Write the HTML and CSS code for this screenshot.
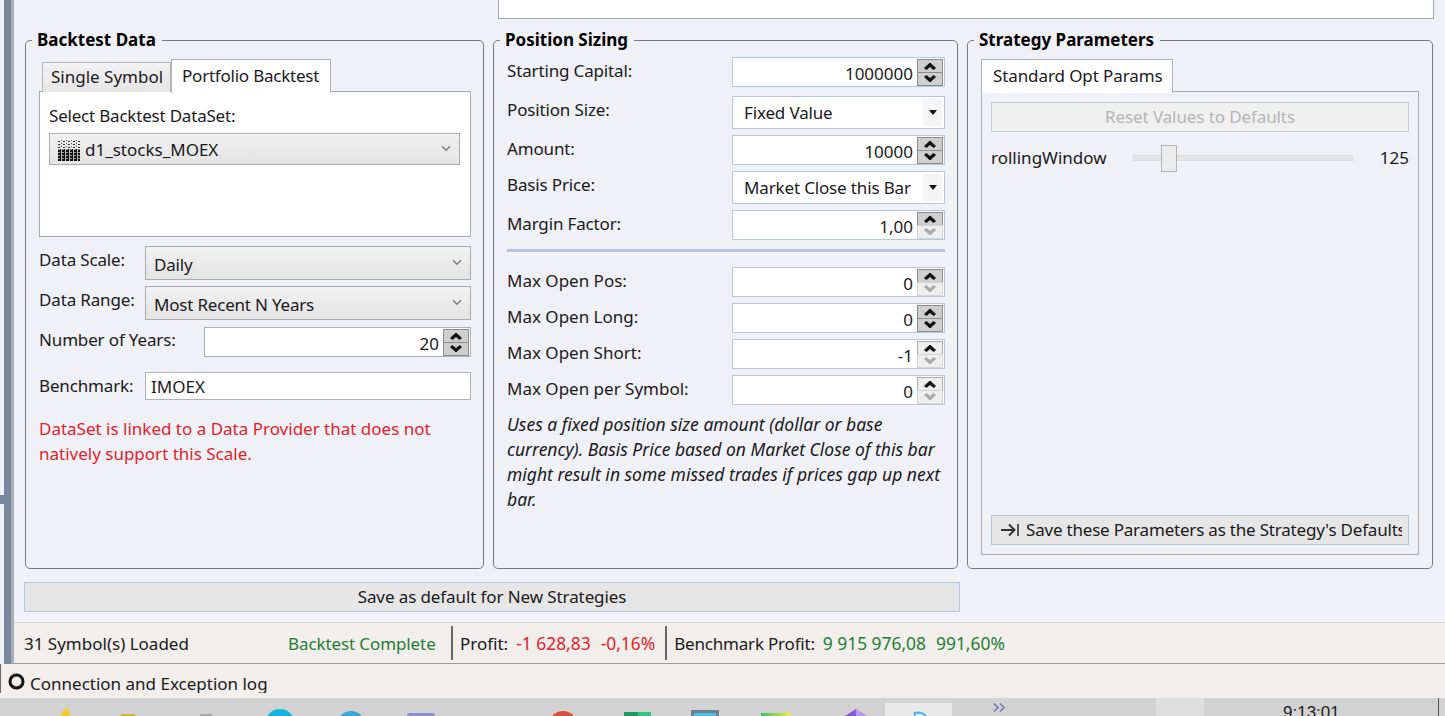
FILE: index.html
```html
<!DOCTYPE html>
<html lang="en">
<head>
<meta charset="utf-8">
<title>Backtest Settings</title>
<link rel="stylesheet" href="styles.css">
</head>
<body>
<svg class="defs" width="0" height="0">
  <defs>
    <symbol id="chev" viewBox="0 0 10 7"><path d="M1 1.2 5 5.2l4-4" fill="none" stroke="#808080" stroke-width="1.6"/></symbol>
    <symbol id="up" viewBox="0 0 12 8"><path d="M6 1 11.5 6 9.5 7.5 6 4.5 2.5 7.5 .5 6Z"/></symbol>
    <symbol id="down" viewBox="0 0 12 8"><path d="M6 7 11.5 2 9.5 .5 6 3.5 2.5 .5 .5 2Z"/></symbol>
    <pattern id="dots" width="5" height="3" patternUnits="userSpaceOnUse"><rect width="2" height="1" fill="#333"/><rect x="3" y="2" width="1" height="1" fill="#555"/></pattern>
    <pattern id="grid" width="4" height="3" patternUnits="userSpaceOnUse"><rect width="4" height="3" fill="#111"/><rect x="3" width="1" height="3" fill="#bbb"/><rect y="2" width="2" height="1" fill="#999"/></pattern>
    <linearGradient id="rb"><stop offset="0" stop-color="#2fc46a"/><stop offset="1" stop-color="#f6f03c"/></linearGradient>
  </defs>
</svg>
<div class="app">
  <div class="main">
    <div class="strip"><div class="strip-mark"></div></div>
    <div class="content">
      <div class="topbox"></div>
      <div class="groups">
        <fieldset class="group">
          <legend>Backtest Data</legend>
          <div class="tabs tabs-data">
            <div class="tab">Single Symbol</div>
            <div class="tab tab-active tab-port">Portfolio Backtest</div>
          </div>
          <div class="tabpanel panel-data">
            <div class="panel-label">Select Backtest DataSet:</div>
            <div class="combo combo-set">
              <svg class="ds-icon" width="22" height="23" viewBox="0 0 22 23"><rect y="1" width="22" height="10" fill="url(#dots)"/><rect y="11" width="22" height="12" fill="url(#grid)"/></svg>
              <span class="combo-text">d1_stocks_MOEX</span>
              <svg class="chev" width="10" height="7"><use href="#chev"/></svg>
            </div>
          </div>
          <div class="row row-a">
            <span class="lab lab-up">Data Scale:</span>
            <div class="combo combo-tall"><span class="combo-text">Daily</span><svg class="chev" width="10" height="7"><use href="#chev"/></svg></div>
          </div>
          <div class="row row-b">
            <span class="lab lab-up">Data Range:</span>
            <div class="combo combo-tall"><span class="combo-text">Most Recent N Years</span><svg class="chev" width="10" height="7"><use href="#chev"/></svg></div>
          </div>
          <div class="row row-c">
            <span class="lab">Number of Years:</span>
            <div class="spin spin-gray"><span class="val">20</span><div class="spinbtns"><span class="sb"><svg width="12" height="8"><use href="#up"/></svg></span><span class="sb"><svg width="12" height="8"><use href="#down"/></svg></span></div></div>
          </div>
          <div class="row row-d">
            <span class="lab lab-flat">Benchmark:</span>
            <div class="textbox">IMOEX</div>
          </div>
          <p class="warn">DataSet is linked to a Data Provider that does not natively support this Scale.</p>
        </fieldset>

        <fieldset class="group">
          <legend>Position Sizing</legend>
          <div class="frow frow-first">
            <span class="lab">Starting Capital:</span>
            <div class="spin"><span class="val">1000000</span><div class="spinbtns"><span class="sb"><svg width="12" height="8"><use href="#up"/></svg></span><span class="sb"><svg width="12" height="8"><use href="#down"/></svg></span></div></div>
          </div>
          <div class="frow frow-pos">
            <span class="lab lab-drop">Position Size:</span>
            <div class="drop"><span class="drop-text">Fixed Value</span><span class="drop-btn"><i class="tri"></i></span></div>
          </div>
          <div class="frow">
            <span class="lab">Amount:</span>
            <div class="spin"><span class="val">10000</span><div class="spinbtns"><span class="sb"><svg width="12" height="8"><use href="#up"/></svg></span><span class="sb"><svg width="12" height="8"><use href="#down"/></svg></span></div></div>
          </div>
          <div class="frow">
            <span class="lab lab-drop">Basis Price:</span>
            <div class="drop"><span class="drop-text">Market Close this Bar</span><span class="drop-btn"><i class="tri"></i></span></div>
          </div>
          <div class="frow">
            <span class="lab">Margin Factor:</span>
            <div class="spin"><span class="val">1,00</span><div class="spinbtns"><span class="sb"><svg width="12" height="8"><use href="#up"/></svg></span><span class="sb sb-off"><svg width="12" height="8"><use href="#down"/></svg></span></div></div>
          </div>
          <div class="sep"></div>
          <div class="frow frow-max">
            <span class="lab">Max Open Pos:</span>
            <div class="spin"><span class="val">0</span><div class="spinbtns"><span class="sb"><svg width="12" height="8"><use href="#up"/></svg></span><span class="sb sb-off"><svg width="12" height="8"><use href="#down"/></svg></span></div></div>
          </div>
          <div class="frow frow-max">
            <span class="lab">Max Open Long:</span>
            <div class="spin"><span class="val">0</span><div class="spinbtns"><span class="sb"><svg width="12" height="8"><use href="#up"/></svg></span><span class="sb"><svg width="12" height="8"><use href="#down"/></svg></span></div></div>
          </div>
          <div class="frow frow-max">
            <span class="lab">Max Open Short:</span>
            <div class="spin"><span class="val">-1</span><div class="spinbtns"><span class="sb sb-light"><svg width="12" height="8"><use href="#up"/></svg></span><span class="sb sb-off"><svg width="12" height="8"><use href="#down"/></svg></span></div></div>
          </div>
          <div class="frow frow-max">
            <span class="lab">Max Open per Symbol:</span>
            <div class="spin"><span class="val">0</span><div class="spinbtns"><span class="sb sb-light"><svg width="12" height="8"><use href="#up"/></svg></span><span class="sb sb-off"><svg width="12" height="8"><use href="#down"/></svg></span></div></div>
          </div>
          <p class="note">Uses a fixed position size amount (dollar or base currency). Basis Price based on Market Close of this bar might result in some missed trades if prices gap up next bar.</p>
        </fieldset>

        <fieldset class="group">
          <legend>Strategy Parameters</legend>
          <div class="tabs">
            <div class="tab tab-active tab-params">Standard Opt Params</div>
          </div>
          <div class="tabpanel panel-params">
            <div class="btn btn-off">Reset Values to Defaults</div>
            <div class="slider-row">
              <span class="slider-name">rollingWindow</span>
              <div class="track"><div class="thumb"></div></div>
              <span class="slider-val">125</span>
            </div>
            <div class="btn btn-save">
              <svg width="20" height="16" viewBox="0 0 20 16"><path d="M1 8h13M9 2.5 14.5 8 9 13.5" fill="none" stroke="#333" stroke-width="2"/><path d="M18 2v12" stroke="#333" stroke-width="1.6"/></svg>
              <span class="save-text">Save these Parameters as the Strategy's Defaults</span>
            </div>
          </div>
        </fieldset>
      </div>
      <div class="btn btn-wide">Save as default for New Strategies</div>
      <div class="status">
        <span class="st-loaded">31 Symbol(s) Loaded</span>
        <span class="st-done good">Backtest Complete</span>
        <span class="st-div"></span>
        <span class="st-item">Profit:</span>
        <span class="st-num bad">-1 628,83</span>
        <span class="st-num bad">-0,16%</span>
        <span class="st-div"></span>
        <span class="st-item st-bench">Benchmark Profit:</span>
        <span class="st-num good">9 915 976,08</span>
        <span class="st-num good">991,60%</span>
      </div>
    </div>
  </div>
  <div class="logbar">
    <div class="log-inner">
      <svg width="18" height="18" viewBox="0 0 18 18"><circle cx="8.5" cy="8.5" r="6.5" fill="none" stroke="#111" stroke-width="3"/></svg>
      <span>Connection and Exception log</span>
    </div>
  </div>
  <div class="taskbar">
    <svg class="tb-icons" width="885" height="18" viewBox="0 0 885 18">
      <path d="M65 11l3-1 2 8H60z" fill="#f6c927"/>
      <rect x="121" y="16" width="14" height="4" fill="#e8a93b"/>
      <rect x="200" y="16" width="12" height="3" fill="#a8a8a8"/>
      <circle cx="280" cy="26" r="15" fill="#12b5de"/>
      <circle cx="351" cy="27" r="14" fill="#3ea5e0"/>
      <rect x="407" y="15" width="28" height="12" rx="3" fill="#8d8fd0"/>
      <circle cx="563" cy="27" r="14" fill="#dc4f3e"/>
      <rect x="624" y="14" width="14" height="8" fill="#1f9a60"/>
      <rect x="638" y="14" width="13" height="8" fill="#33c481"/>
      <rect x="691" y="12" width="28" height="8" fill="#6f7f8c"/>
      <rect x="694" y="15" width="22" height="5" fill="#45c2ee"/>
      <rect x="761" y="15" width="30" height="5" fill="url(#rb)"/>
      <path d="M856 11l11 7h-22z" fill="#8a5ad8"/>
      <path d="M856 11l11 7h-11z" fill="#bb99ec"/>
    </svg>
    <div class="tb-active"><svg width="20" height="13" viewBox="0 0 20 13"><path d="M5 3c5-1 9 0 12 3M9 13l-4-10" fill="none" stroke="#4bb4ea" stroke-width="2"/></svg></div>
    <svg class="tb-more" width="12" height="9" viewBox="0 0 12 9"><path d="M1 .5 5 4.500 1 8.500M7 .5 11 4.500 7 8.500" fill="none" stroke="#7175b8" stroke-width="1.500"/></svg>
    <div class="tb-light"></div>
    <span class="tb-clock">9:13:01</span>
    <span class="tb-edge"></span>
  </div>
</div>
</body>
</html>
```
FILE: styles.css
```css
* { box-sizing: border-box; }
html, body { margin: 0; padding: 0; height: 100%; }
body {
  background: #f0f0f7;
  color: #1a1a1a;
  font-family: "Noto Sans", "Open Sans", sans-serif;
  font-size: 17px;
  overflow: hidden;
}
.defs { display: block; height: 0; }
.app { width: 1445px; height: 716px; display: flex; flex-direction: column; overflow: hidden; }
.main { height: 664px; display: flex; flex: none; }

.strip {
  width: 14px; flex: none;
  background: linear-gradient(90deg, #eef0f6 0 4px, #76899e 4px 11px, #a9aeb4 11px 14px);
  padding-top: 495px;
}
.strip-mark { width: 4px; height: 9px; background: #76899e; }

.content { flex: 1; min-width: 0; display: flex; flex-direction: column; }
.topbox {
  height: 19px; flex: none;
  margin: 0 11px 0 484px;
  background: #fff;
  border: 1px solid #a8a8a8;
  border-top: 0;
}
.groups {
  display: grid;
  grid-template-columns: 459px 465px 466px;
  column-gap: 9px;
  margin: 11px 0 0 11px;
  height: 540px;
  flex: none;
}
.group {
  margin: 0; min-width: 0; height: 539px;
  padding: 0 13px;
  border: 1px solid #6e7b86;
  border-radius: 5px;
  display: block;
}
.group legend {
  font-weight: 700;
  font-size: 17px;
  line-height: 20px;
  padding: 0 6px 0 5px;
  margin-left: -7px;
  color: #000;
}

.tabs { display: flex; align-items: flex-end; height: 34px; margin-top: 8px; }
.tabs-data { padding-left: 3px; }
.tab {
  height: 30px; width: 129px; padding: 0 0 0 8px;
  border: 1px solid #b4b4b4; border-bottom: 0;
  background: linear-gradient(#f2f2f2, #e6e6e6);
  line-height: 28px;
  white-space: nowrap;
}
.tab-active {
  height: 34px; padding: 0 10px;
  background: #fff;
  position: relative;
  z-index: 1;
  line-height: 32px;
  margin-bottom: -1px;
}
.tab-port { width: 160px; letter-spacing: -0.22px; }
.tab-params { padding: 0 11px; width: 192px; letter-spacing: -0.1px; }
.tabpanel {
  height: 146px;
  margin-top: -1px;
  background: #fff;
  border: 1px solid #aaa;
  padding: 11px 9px 0;
}
.panel-data { width: 432px; }
.panel-label { line-height: 25px; letter-spacing: -0.2px; }
.combo {
  display: flex; align-items: center;
  background: linear-gradient(#f1f1f1, #e4e4e4);
  border: 1px solid #acacac;
  padding: 0 8px;
}
.combo-set { height: 32px; width: 411px; margin-top: 5px; padding-left: 8px; }
.combo-tall { height: 34px; }
.combo-text { flex: 1; padding-top: 3px; white-space: nowrap; letter-spacing: -0.2px; }
.combo-set .combo-text { padding: 0 0 0 5px; letter-spacing: 0; }
.chev { flex: none; margin-right: 0; margin-bottom: 2px; }
.ds-icon { flex: none; }

.row { display: grid; grid-template-columns: 106px 326px; align-items: center; }
.row-a { margin-top: 9px; }
.row-b { margin-top: 6px; }
.row-c { margin-top: 7px; grid-template-columns: 165px 267px; }
.row-d { margin-top: 15px; }
.lab { padding-bottom: 5px; white-space: nowrap; letter-spacing: -0.15px; }
.lab-up { padding-bottom: 7px; }
.lab-flat { padding-bottom: 1px; }
.textbox {
  height: 28px; background: #fff;
  border: 1px solid #b4b4b4;
  padding: 0 5px; line-height: 28px;
}
.warn { margin: 16px 0 0; line-height: 25px; color: #e2222a; width: 432px; }

.spin {
  display: flex; align-items: center; justify-content: flex-end;
  height: 30px; background: #fff;
  border: 1px solid #b7c6dc;
  padding-right: 1px;
}
.spin-gray { border-color: #b0b0b0; }
.val { padding: 3px 4px 0 0; }
.spinbtns { display: flex; flex-direction: column; width: 26px; height: 27px; flex: none; }
.sb {
  flex: 1; display: flex; align-items: center; justify-content: center;
  background: #cfcfcf; border: 1px solid #8c8c8c;
  fill: #111; stroke: #111; stroke-width: 1px;
}
.sb + .sb { margin-top: -1px; }
.sb-light { background: #eee; border-color: #aaa; }
.sb-off { background: #eee; border-color: #d4d4d4; fill: #aaa; stroke: #aaa; }

.frow { display: grid; grid-template-columns: 225px 213px; align-items: center; margin-top: 6px; }
.frow > .lab { padding-bottom: 3px; }
.frow > .lab-drop { padding-bottom: 7px; }
.frow-first { margin-top: 7px; }
.frow-pos { margin-top: 9px; }
.frow-max > .lab { letter-spacing: 0; }
.drop {
  height: 33px; display: flex; align-items: center;
  background: #fff; border: 1px solid #b7c6dc;
  padding: 0 2px 0 11px;
}
.drop-text { flex: 1; white-space: nowrap; letter-spacing: -0.15px; }
.drop-btn {
  width: 19px; height: 27px; background: #f4f4f4;
  display: flex; align-items: center; justify-content: center;
}
.tri { width: 0; height: 0; border: 4px solid transparent; border-top: 5px solid #111; border-bottom: 0; }
.sep { height: 3px; background: #b3c6de; margin-top: 9px; width: 438px; margin-bottom: 15px; }
.sep + .frow-max { margin-top: 0; }
.note { margin: 7px 0 0; font-style: italic; line-height: 25px; width: 438px; font-size: 17.5px; }

.panel-params {
  height: 464px; background: transparent;
  padding: 10px 9px 9px;
  display: flex; flex-direction: column;
}
.btn { text-align: center; white-space: nowrap; }
.btn-off {
  height: 30px; line-height: 28px;
  border: 1px solid #c9c9c9;
  background: #f0f0f0;
  color: #b4b4b4;
  letter-spacing: -0.1px;
}
.slider-row { display: flex; align-items: center; height: 27px; margin-top: 12px; }
.slider-name { width: 142px; flex: none; padding-bottom: 1px; }
.track { width: 220px; height: 6px; background: #e6e6e6; border: 1px solid #dcdcdc; position: relative; flex: none; }
.thumb {
  position: absolute; left: 27px; top: -11px;
  width: 16px; height: 27px;
  background: #ececec; border: 1px solid #b4b4b4;
}
.slider-val { flex: 1; text-align: right; padding-bottom: 1px; }
.btn-save {
  margin-top: auto; height: 30px;
  display: flex; align-items: center; gap: 6px;
  padding: 0 6px 2px 8px;
  background: #e6e6e6; border: 1px solid #b7c6dc;
  text-align: left;
}
.btn-save svg { flex: none; margin-top: 2px; }
.save-text { flex: 1; overflow: hidden; letter-spacing: -0.2px; }

.btn-wide {
  width: 936px; height: 30px; flex: none;
  margin: 12px 0 0 10px;
  line-height: 28px;
  background: #e6e6e6; border: 1px solid #b7c6dc;
  letter-spacing: -0.1px;
}
.status {
  flex: none; height: 42px; margin-top: 10px;
  display: flex; align-items: center;
  background: #f1eeec;
  border-top: 1px solid #d4d4d4;
  border-bottom: 1px solid #9c9c9c;
  padding-left: 10px;
  white-space: nowrap;
}
.st-loaded { width: 264px; }
.st-done { width: 163px; letter-spacing: -0.1px; }
.st-div { width: 2px; height: 34px; background: #666; margin-right: 7px; }
.st-item { margin-right: 8px; }
.st-bench { letter-spacing: -0.2px; }
.st-num { margin-right: 10px; font-size: 17.4px; }
.good { color: #1f8033; }
.bad { color: #e2222a; }

.logbar { height: 34px; flex: none; background: #f1eeec; }
.log-inner {
  height: 29px; overflow: hidden;
  display: flex; align-items: flex-end; gap: 4px;
  border-left: 1px solid #666;
  padding-left: 7px;
  line-height: 24px;
}
.log-inner svg { margin-bottom: 2px; }
.log-inner span { position: relative; top: 3px; }

.taskbar {
  height: 18px; flex: none;
  background: #d2d2d2;
  display: flex; align-items: flex-start;
  overflow: hidden;
}
.tb-icons { flex: none; }
.tb-active {
  width: 67px; height: 13px; margin-top: 5px; flex: none;
  background: #e9e9e9;
  display: flex; justify-content: center;
  padding-top: 7px;
  overflow: hidden;
}
.tb-more { margin: 5px 151px 0 41px; flex: none; }
.tb-light { width: 48px; height: 18px; background: #dedede; flex: none; }
.tb-clock { margin-left: 79px; width: 155px; line-height: 24px; margin-top: 3px; color: #222; flex: none; font-family: "Liberation Sans", sans-serif; font-size: 17px; }
.tb-edge { width: 1px; height: 18px; background: #555; flex: none; }
```
